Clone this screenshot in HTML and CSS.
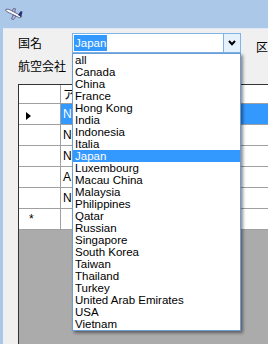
FILE: index.html
```html
<!DOCTYPE html>
<html lang="ja">
<head>
<meta charset="utf-8">
<title>国名</title>
<link rel="stylesheet" href="styles.css">
</head>
<body>
<div class="window">
  <div class="titlebar">
    <svg class="appicon" width="18" height="12" viewBox="0 0 18 12">
      <polygon points="6,4.5 8.5,0.5 10.5,0.8 9.5,5.5" fill="#b4b9d4" stroke="#4a4f78" stroke-width="0.7"/>
      <polygon points="1,1.2 4,1.4 15,7.2 16.2,9.2 14.5,9.8 3,4.2 0.6,2.6" fill="#ffffff" stroke="#4d5276" stroke-width="0.8"/>
      <polygon points="8,7 6.5,11 8.5,11.5 11,8.2" fill="#b4b9d4" stroke="#4a4f78" stroke-width="0.7"/>
      <polygon points="13,7 15.5,3.2 17.5,3.6 16.3,9.3" fill="#2c3070"/>
    </svg>
  </div>
  <div class="client">
    <div class="form-row first">
      <span class="label">国名</span>
      <div class="combo">
        <span class="sel">Japan</span>
        <span class="btn">
          <svg width="8" height="6" viewBox="0 0 8 6"><polyline points="1,1 4,4.2 7,1" fill="none" stroke="#000" stroke-width="2"/></svg>
        </span>
      </div>
      <span class="label side">区</span>
    </div>
    <div class="form-row second">
      <span class="label">航空会社</span>
      <div class="combo plain"></div>
    </div>
    <div class="grid">
      <div class="table">
        <div class="hd rh"></div><div class="hd">ア</div>
        <div class="rh"><span class="cur"></span></div><div class="cell selc">N</div>
        <div class="rh"></div><div class="cell">N</div>
        <div class="rh"></div><div class="cell">N</div>
        <div class="rh"></div><div class="cell">A</div>
        <div class="rh"></div><div class="cell">N</div>
        <div class="rh"><span class="star">*</span></div><div class="cell"></div>
      </div>
    </div>
    <ul class="dropdown">
      <li>all</li>
      <li>Canada</li>
      <li>China</li>
      <li>France</li>
      <li>Hong Kong</li>
      <li>India</li>
      <li>Indonesia</li>
      <li>Italia</li>
      <li class="hi">Japan</li>
      <li>Luxembourg</li>
      <li>Macau China</li>
      <li>Malaysia</li>
      <li>Philippines</li>
      <li>Qatar</li>
      <li>Russian</li>
      <li>Singapore</li>
      <li>South Korea</li>
      <li>Taiwan</li>
      <li>Thailand</li>
      <li>Turkey</li>
      <li>United Arab Emirates</li>
      <li>USA</li>
      <li>Vietnam</li>
    </ul>
  </div>
</div>
</body>
</html>
```

FILE: styles.css
```css
* { box-sizing: border-box; }
html, body { margin: 0; padding: 0; }
body {
  font-family: "Liberation Sans", Arial, sans-serif;
  font-size: 12px;
  color: #000;
  background: #abc8e9;
}
.window {
  width: 268px;
  height: 344px;
  overflow: hidden;
  background: #abc8e9;
  display: flex;
  flex-direction: column;
}
.titlebar {
  height: 28px;
  flex: none;
  padding: 8px 0 0 5px;
}
.appicon { display: block; }
.client {
  flex: 1;
  margin-left: 3px;
  background: #f0f0f0;
  border-top: 1px solid #dfe9f5;
  position: relative;
  display: flex;
  flex-direction: column;
  overflow: hidden;
}
.form-row {
  display: flex;
  align-items: center;
  height: 20px;
  padding-left: 15px;
  flex: none;
}
.form-row.first { margin-top: 4px; }
.form-row.second { margin-top: 3px; }
.label {
  width: 54px;
  flex: none;
  font-family: "Noto Sans CJK JP", "Liberation Sans", sans-serif;
  font-size: 12px;
  line-height: 14px;
  white-space: nowrap;
}
.label.side {
  width: auto;
  margin-left: 15px;
  margin-top: 8px;
}
.combo {
  width: 169px;
  height: 20px;
  flex: none;
  border: 1px solid #7eb4ea;
  background: #fff;
  display: flex;
}
.combo.plain { border-color: #acacac; }
.combo .sel {
  margin: 1px;
  background: #3399ff;
  color: #fff;
  padding: 0 1px;
  font-size: 11.5px;
  line-height: 16px;
  height: 16px;
}
.combo .btn {
  margin-left: auto;
  width: 17px;
  background: #e5f1fb;
  border-left: 1px solid #7eb4ea;
  display: flex;
  align-items: center;
  justify-content: center;
}
.combo .btn svg { display: block; margin-top: -1px; }
.grid {
  flex: 1;
  margin: 8px 0 0 15px;
  border-top: 1px solid #333;
  border-left: 1px solid #333;
  background: #ababab;
  overflow: hidden;
}
.table {
  display: grid;
  grid-template-columns: 42px 230px;
  grid-template-rows: 19px repeat(6, 21px);
  width: 272px;
}
.table > div {
  background: #fff;
  border-right: 1px solid #a0a0a0;
  border-bottom: 1px solid #a0a0a0;
  white-space: nowrap;
  overflow: hidden;
}
.hd {
  font-family: "Noto Sans CJK JP", "Liberation Sans", sans-serif;
  padding-left: 2px;
  line-height: 18px;
}
.cell {
  padding-left: 2px;
  line-height: 20px;
}
.cell.selc { background: #3399ff !important; color: #fff; }
.rh { position: relative; }
.cur {
  position: absolute;
  left: 7px;
  top: 8px;
  width: 0;
  height: 0;
  border-top: 4px solid transparent;
  border-bottom: 4px solid transparent;
  border-left: 5px solid #000;
}
.star {
  position: absolute;
  left: 10px;
  top: 4px;
  font-size: 12px;
  line-height: 12px;
}
.dropdown {
  position: absolute;
  left: 69px;
  top: 24px;
  width: 169px;
  margin: 0;
  padding: 0;
  list-style: none;
  background: #fff;
  border: 1px solid #6a9cd6;
  box-shadow: 2px 2px 3px rgba(0, 0, 0, 0.45);
}
.dropdown li {
  height: 12px;
  font-size: 11.5px;
  line-height: 12px;
  padding-left: 2px;
  white-space: nowrap;
}
.dropdown li.hi { background: #3399ff; color: #fff; }
```
